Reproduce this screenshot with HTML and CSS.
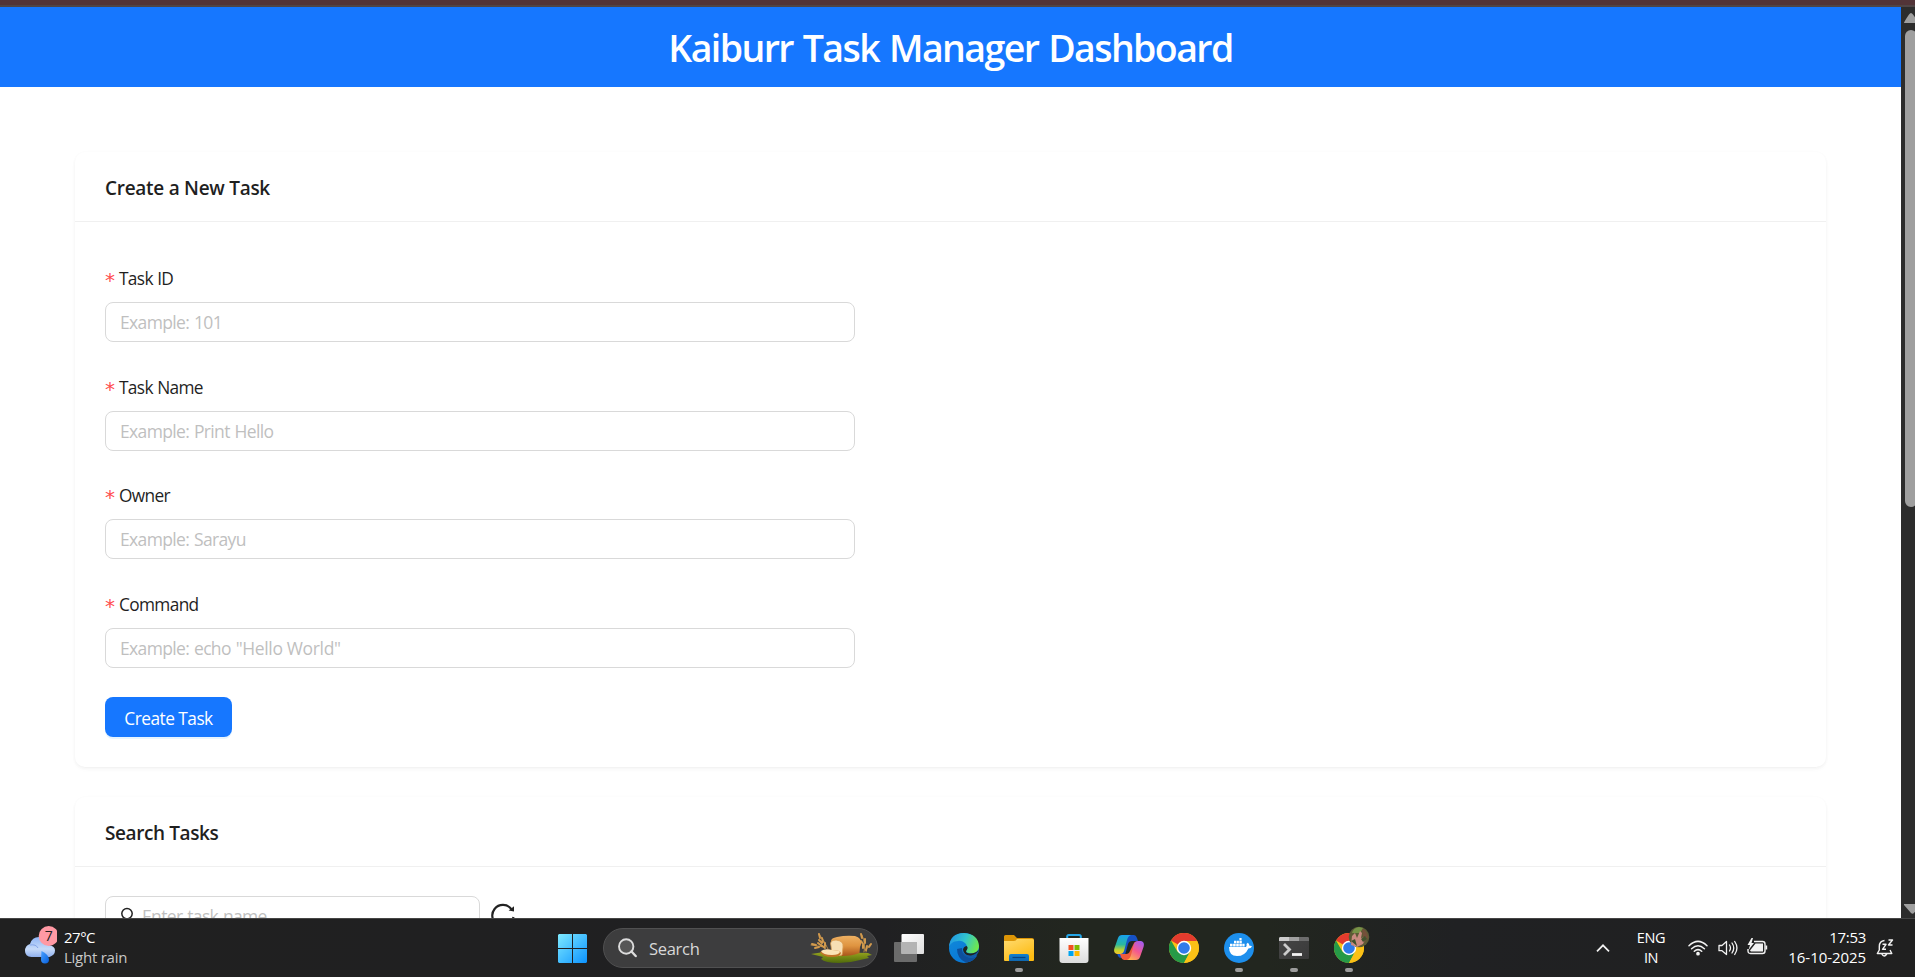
FILE: index.html
```html
<!DOCTYPE html>
<html lang="en">
<head>
<meta charset="utf-8">
<title>Kaiburr Task Manager Dashboard</title>
<link rel="stylesheet" href="styles.css">
</head>
<body>
<div class="screen">
  <div class="window-edge"></div>
  <div class="viewport">
    <div class="page">
      <header class="header"><h1 class="header-title">Kaiburr Task Manager Dashboard</h1></header>
      <main class="content">
        <section class="card">
          <h2 class="card-head"><span class="t-create">Create a New Task</span></h2>
          <form class="card-body form">
            <div class="field">
              <label class="label"><span class="req">*</span><span>Task ID</span></label>
              <div class="input">Example: 101</div>
            </div>
            <div class="field">
              <label class="label"><span class="req">*</span><span>Task Name</span></label>
              <div class="input">Example: Print Hello</div>
            </div>
            <div class="field">
              <label class="label"><span class="req">*</span><span>Owner</span></label>
              <div class="input">Example: Sarayu</div>
            </div>
            <div class="field">
              <label class="label"><span class="req">*</span><span>Command</span></label>
              <div class="input">Example: echo <span class="quoted">"Hello World"</span></div>
            </div>
            <button type="button" class="btn">Create Task</button>
          </form>
        </section>
        <section class="card">
          <h2 class="card-head"><span>Search Tasks</span></h2>
          <div class="card-body search-row">
            <div class="input search-input">
              <svg width="14" height="18" viewBox="0 0 14 18" fill="none" stroke="#222" stroke-width="1.5"><circle cx="7" cy="6.6" r="5.2"/><path d="M3.500 10.800 1 15"/></svg>
              <span>Enter task name</span>
            </div>
            <svg class="reload" width="26" height="26" viewBox="0 0 26 26" fill="none" stroke="#222" stroke-width="2.2"><path d="M21.4 7.2A10.6 10.6 0 1 0 23.4 15"/><path d="M24 4.2v5.3l-5.4-.9z" fill="#222" stroke="none"/></svg>
          </div>
        </section>
      </main>
    </div>
    <div class="scrollbar">
      <svg width="14" height="25" viewBox="0 0 14 25"><path d="M3 16q0-1.200 5-8.500 2-3 4 0l6 8.500z" fill="#9f9f9f"/></svg>
      <div class="thumb"></div>
      <svg class="sb-down" width="14" height="14" viewBox="0 0 14 14"><path d="M3 0h16l-6 9q-1.500 1.500-3 0L3 1z" fill="#9f9f9f"/></svg>
    </div>
  </div>
  <footer class="taskbar">
    <div class="weather">
      <svg width="32" height="40" viewBox="0 0 32 40">
        <defs>
          <linearGradient id="cl" x1="0" y1="0" x2="0" y2="1"><stop offset="0" stop-color="#8fb5f5"/><stop offset=".6" stop-color="#c7dbf9"/><stop offset="1" stop-color="#8fb0ee"/></linearGradient>
          <linearGradient id="dr" x1="0" y1="0" x2="1" y2="1"><stop offset="0" stop-color="#4ba0ff"/><stop offset="1" stop-color="#0660dd"/></linearGradient>
        </defs>
        <path d="M5 18q2-7 9-7t10 8q6 1 6 5.500T24.500 31H6.500Q0 30.500 0 25t5-7z" fill="url(#cl)"/>
        <path d="M5 19q6-1 8 3" fill="none" stroke="#85a5e8"/>
        <path d="M16.500 25q7 3 7.500 8.500a4 4 0 0 1-8 0z" fill="url(#dr)"/>
        <circle cx="23.700" cy="10" r="10" fill="#ff99a4"/>
        <text x="19.800" y="15" class="badge">7</text>
      </svg>
      <div class="two-line"><span class="temp">27°C</span><span class="cond">Light rain</span></div>
    </div>
    <nav class="apps">
      <svg class="win" width="29" height="29" viewBox="0 0 29 29">
        <defs><linearGradient id="w" gradientUnits="userSpaceOnUse" x1="0" y1="0" x2="29" y2="29"><stop offset="0" stop-color="#7eeaff"/><stop offset="1" stop-color="#0c93ff"/></linearGradient></defs>
        <path d="M1 0h13v14H0V1zM15 0h13l1 1v13H15zM0 15h14v14H1l-1-1zM15 15h14v13l-1 1H15z" fill="url(#w)"/>
      </svg>
      <div class="search">
        <svg width="19" height="20" viewBox="0 0 19 20" fill="none" stroke="#dcdcdc"><circle cx="8.200" cy="8.500" r="7.200" stroke-width="1.900" fill="#565656"/><path d="m13.500 13.500 4.200 4.500" stroke-width="2.400" stroke-linecap="round"/></svg>
        <span>Search</span>
        <svg class="bread" width="64" height="32" viewBox="0 0 64 32">
          <defs>
            <linearGradient id="b" x1="0" y1="0" x2="0" y2="1"><stop offset="0" stop-color="#eeb163"/><stop offset=".5" stop-color="#df9440"/><stop offset="1" stop-color="#a9551a"/></linearGradient>
            <linearGradient id="gr" x1="0" y1="0" x2="0" y2="1"><stop offset="0" stop-color="#97a51e"/><stop offset="1" stop-color="#4f6a0b"/></linearGradient>
          </defs>
          <path d="M1 22l13-2 44 1 4 2-5 1 2 2-9 2q-10 3-21 3-14 0-18-4l2-2z" fill="url(#gr)"/>
          <g stroke="#d29a4d" fill="none" stroke-linecap="round"><path d="M18 17Q14 8 9 2" stroke-width=".8"/><path d="M9 2l1 4m2 0 1 4M9 8l3 3m3 0v3m-4-1 4 3" stroke-width="2"/><path d="M14 15 1 13" stroke-width=".8"/><path d="M2 12l4 1M5 16l4-1M8 11l4 3" stroke-width="2"/><path d="M54 20q2-8-2-17M56 20q0-5 5-8" stroke-width=".8"/><path d="M51 2l1 4m-1 3 2 3m2-5v4m-2 2v3M61 12l-2 3m-2-1-1 4" stroke-width="2"/></g>
          <path d="M21 9q0-3 6-4 9-2 18-1 7 2 6 8-.5 2-1 3l-.5 6q-7 3-18 3z" fill="url(#b)"/>
          <path d="M21 14q-2-6 5-6 8 1 7 7l-1 8q-5 2-10-1z" fill="#f7dfb4" stroke="#dda154" stroke-width=".8"/>
          <path d="M10 20q4-3 12-2 8 0 9 3-1 4-9 4-9 0-12-5z" fill="#c27428"/>
          <path d="M11 19q4-3 11-1 8 0 8 2-1 3-8 3-9 0-11-4z" fill="#fbe4b7"/>
        </svg>
      </div>
      <div class="app">
        <svg width="30" height="30" viewBox="0 0 30 30">
          <defs><linearGradient id="tv" x1="0" y1="0" x2="1" y2="1"><stop offset="0" stop-color="#fff"/><stop offset="1" stop-color="#dedede"/></linearGradient></defs>
          <rect y="9" width="23" height="20" rx="1" fill="#6b6b6b"/><rect x="7.500" y="1" width="22.500" height="20" rx="1" fill="url(#tv)"/><path d="M7.500 9H23v12H7.500z" fill="#b4b4b4"/>
        </svg>
      </div>
      <div class="app">
        <svg width="30" height="30" viewBox="0 0 30 30">
          <defs>
            <linearGradient id="e1" x1="0" y1=".3" x2="1" y2=".6"><stop offset="0" stop-color="#2096e4"/><stop offset=".5" stop-color="#32c5ce"/><stop offset="1" stop-color="#71e947"/></linearGradient>
            <linearGradient id="e2" x1="0" y1="0" x2=".6" y2="1"><stop offset="0" stop-color="#118bdb"/><stop offset="1" stop-color="#0876d5"/></linearGradient>
          </defs>
          <circle cx="15" cy="15" r="15" fill="url(#e2)"/>
          <path d="M8 16q0 9 8 13 7 1 12-6-6 3-11 0-4-2-4-8z" fill="#0d4f9c"/>
          <path d="M0 14Q1 0 15 0q14 1 15 13c0 6-5 8-10 7-3-.5-3.500-2-2.200-3C20 12 14 7 9 8 4 8 1 11 0 14z" fill="url(#e1)"/>
          <path d="M17.800 17c-1.600 1.500-.5 3.200 3 3.400 3 .2 6-.5 8.700-3.400v5q-6 2-11 .500-4-2-4.500-6 .5-3 3.500-3.500 2 1 .3 4z" fill="#202320"/>
          <path d="M30 17q-1 4-3.500 6.500Q20 26 16 23q-3-2-3-5 4 5 9 4.500 5-1 8-5.500z" fill="#125aa7"/>
        </svg>
      </div>
      <div class="app">
        <svg width="30" height="30" viewBox="0 0 30 30">
          <defs><linearGradient id="fo" x1="0" y1="0" x2=".6" y2="1"><stop offset="0" stop-color="#ffdb70"/><stop offset="1" stop-color="#fdbb12"/></linearGradient><linearGradient id="fb" x1="0" y1="0" x2="0" y2="1"><stop offset="0" stop-color="#1180d0"/><stop offset="1" stop-color="#0f68b0"/></linearGradient></defs>
          <path d="M0 3.500q0-1.500 1.500-1.500H10l3 3h15q2 0 2 2v6H0z" fill="#dc9506"/>
          <path d="M0 8h10q2 0 3-2h15.500Q30 6 30 7.500V27q0 1-1 1H1q-1 0-1-1z" fill="url(#fo)"/>
          <path d="M5 28v-5q0-2 2-2h16q2 0 2 2v5z" fill="url(#fb)"/><path d="M8.500 24.500h13" stroke="#07437f" stroke-width="1.200"/>
        </svg>
        <i class="dot"></i>
      </div>
      <div class="app">
        <svg width="30" height="30" viewBox="0 0 30 30">
          <defs><linearGradient id="st" x1="0" y1="0" x2="0" y2="1"><stop offset="0" stop-color="#fff"/><stop offset="1" stop-color="#dcdcdc"/></linearGradient></defs>
          <path d="M8.200 6V3.500Q8.200 2 9.700 2h10.600q1.500 0 1.500 1.500V6" fill="none" stroke="#24a6e8" stroke-width="2"/>
          <path d="M.5 5h29v22q0 3-3 3h-23q-3 0-3-3z" fill="url(#st)"/>
          <path d="M9.500 12h5v5h-5z" fill="#f25022"/><path d="M15.500 12h5v5h-5z" fill="#7fba00"/><path d="M9.500 18h5v5h-5z" fill="#00a4ef"/><path d="M15.500 18h5v5h-5z" fill="#ffb900"/>
        </svg>
      </div>
      <div class="app">
        <svg width="30" height="30" viewBox="0 0 30 30">
          <defs>
            <linearGradient id="c1" x1="0" y1="0" x2="0" y2="1"><stop offset="0" stop-color="#17a0f0"/><stop offset=".5" stop-color="#2ab8a0"/><stop offset=".8" stop-color="#c5d32b"/><stop offset="1" stop-color="#f6c22c"/></linearGradient>
            <linearGradient id="c2" x1=".8" y1="0" x2=".2" y2="1"><stop offset="0" stop-color="#a45cf0"/><stop offset=".5" stop-color="#f4588f"/><stop offset="1" stop-color="#ffb34d"/></linearGradient>
          </defs>
          <path d="M10 2h10q2 0 3 3l1 3h-6q-3 0-4 3l-3 11q-1 3-4 3-2 0-3-2l-1-3z" fill="#1651c5"/>
          <path d="M20 27H10q-2 0-3-3l-1-3h6q3 0 4-3l4-8q1-2 4-1z" fill="#ee5a3c"/>
          <path d="M8 2h9q-3 1-4 5l-3 11q-1 3-4 3H3q-4-1-2.500-6L4 5q1-3 4-3z" fill="url(#c1)"/>
          <path d="M22 27h-9q3-1 4-5l3-11q1-3 4-3h3q4 1 2.500 6L26 24q-1 3-4 3z" fill="url(#c2)"/>
        </svg>
      </div>
      <div class="app">
        <svg width="30" height="30" viewBox="0 0 30 30">
          <g id="chrome"><circle cx="15" cy="15" r="15" fill="#fbc116"/>
          <path d="M15 15 2 7.500A15 15 0 0 1 28 7.500z" fill="#e33b2e"/>
          <path d="M2 7.500A15 15 0 0 0 15 30l6.500-11.300L15 15 8.500 18.700z" fill="#269a47"/>
          <path d="M15 8h13.200A15 15 0 0 1 15 30l6-11.500z" fill="#fbc116"/>
          <circle cx="15" cy="15" r="7.200" fill="#fff"/><circle cx="15" cy="15" r="5.800" fill="#2f7bea"/></g>
        </svg>
      </div>
      <div class="app">
        <svg width="30" height="30" viewBox="0 0 30 30">
          <circle cx="15" cy="15" r="15" fill="#1d8fed"/>
          <path d="M5 14h17q1-1 .5-3l1.300-1.200q1.500 1 1.700 3 1.500-.3 2.500.4-.8 2.200-3.600 2.200Q21 23 13 23q-8 0-8-9z" fill="#fff"/>
          <path d="M6 10.800h2.600v2.600H6zM9.100 10.800h2.600v2.600H9.100zM12.200 10.800h2.600v2.600h-2.600zM15.300 10.800h2.600v2.600h-2.600zM18.300 10.800h2.300v2.600h-2.300zM10 7.800h2.200v2.400H10zM12.700 7.800h2.200v2.400h-2.200zM15.400 7.800h2.400v2.400h-2.400zM15.400 5h2.200v2.200h-2.200z" fill="#fff"/>
        </svg>
        <i class="dot"></i>
      </div>
      <div class="app">
        <svg width="30" height="30" viewBox="0 0 30 30">
          <defs><linearGradient id="te" x1="0" y1="0" x2="1" y2="1"><stop offset="0" stop-color="#464646"/><stop offset="1" stop-color="#3a3a3a"/></linearGradient></defs>
          <rect y="4" width="30" height="22" rx="1" fill="url(#te)"/><path d="M1 4h9v4H0V5z" fill="#ccc"/><path d="M10 4h10v4H10z" fill="#a0a0a0"/><path d="M20 4h9l1 1v3H20z" fill="#6c6c6c"/>
          <path d="m5 11 5.500 5.500L5 22" stroke="#ccc" stroke-width="2.800" fill="none"/><path d="M13 21.500h10" stroke="#f2f2f2" stroke-width="2.800"/>
        </svg>
        <i class="dot"></i>
      </div>
      <div class="app">
        <svg class="wide" width="38" height="38" viewBox="0 -8 38 38">
          <use href="#chrome"/>
          <circle cx="25" cy="4" r="10.300" fill="#5c5b35"/>
          <path d="M18 0q1-5 7-6l4 1-3 5z" fill="#769347"/><path d="M28-4q6 2 6 9l-4 5z" fill="#74503a"/>
          <path d="M18 3l3-3 2 5 3-7 2 2-1 5 5-1-3 7-6 3-6-2z" fill="#c98a80"/><path d="m17 8 4-2 2 7zM27 6l4-3 2 3-4 3z" fill="#42532e"/>
        </svg>
        <i class="dot"></i>
      </div>
    </nav>
    <div class="tray">
      <svg width="14" height="8" viewBox="0 0 14 8" fill="none" stroke="#f2f2f2" stroke-width="1.700"><path d="m1 7.300 6-6 6 6"/></svg>
      <div class="two-line lang"><span class="eng">ENG</span><span>IN</span></div>
      <svg class="wifi" width="20" height="16" viewBox="0 0 20 16" fill="none" stroke="#f2f2f2" stroke-width="1.500" stroke-linecap="round"><path d="M1 5.800q9-8.800 18 0M3.600 8.700q6.400-6 12.800 0M6.300 11.300q3.700-3.300 7.400 0"/><circle cx="10" cy="13.700" r="1.100" fill="#fff"/></svg>
      <svg class="vol" width="20" height="16" viewBox="0 0 20 16" fill="none" stroke="#f2f2f2" stroke-width="1.300" stroke-linejoin="round" stroke-linecap="round"><path d="M1 5.500h3L8.500 1.500v13L4 10.700H1zM11.500 5q2 3 0 6M14 3q3.500 5 0 10M16.700 1.500q4.500 6.500 0 13"/></svg>
      <svg class="bat" width="21" height="18" viewBox="0 0 21 18"><path d="M7 3.500h8.500q2.500 0 2.500 2.500v7q0 2.500-2.500 2.500H3.500Q1 15.500 1 13v-2" fill="none" stroke="#f2f2f2" stroke-width="1.400"/><path d="M8.500 5.500h7.500v8H4l-1-1z" fill="#f2f2f2"/><path d="M18.500 7.500h1.700v4h-1.700z" fill="#f2f2f2"/><path d="m4.500 0-4 7H3l-1.500 5L7 5H4.500L6 0z" fill="#f2f2f2"/></svg>
      <div class="two-line clock"><span class="time">17:53</span><span class="date">16-10-2025</span></div>
      <svg class="bell" width="19" height="20" viewBox="0 0 19 20" fill="none" stroke="#f2f2f2" stroke-width="1.400" stroke-linejoin="round"><path d="M8.500 2.500q-5.200.5-5.200 6V12l-2 3.500h14.500L14 12M5.800 16q2.200 4 5 0"/><path d="M6.500 6.300H10l-3.500 5H10M12.500 2h4l-4 5h4" /></svg>
    </div>
  </footer>
</div>
</body>
</html>
```
FILE: styles.css
```css
* { box-sizing: border-box; }
body { margin: 0; background: #fff; font-family: "Open Sans", "Noto Sans", sans-serif; color: #1f1f1f; }
.screen { width: 1915px; height: 977px; overflow: hidden; display: flex; flex-direction: column; }
.window-edge { height: 7px; flex: none; background: #523438; border-bottom: 2px solid #504546; }
.viewport { height: 911px; flex: none; display: flex; overflow: hidden; }
.page { flex: 1; background: #fff; overflow: hidden; }
.header { height: 80px; background: #1677ff; display: flex; align-items: center; justify-content: center; }
.header-title { margin: 0; color: #fff; font-size: 37.500px; font-weight: 600; letter-spacing: -1.600px; word-spacing: 1.800px; line-height: 80px; padding-top: 1px; white-space: nowrap; }
.content { padding: 65px 75px 0; display: flex; flex-direction: column; gap: 30px; }
.card { border-radius: 10px; background: #fff; box-shadow: 0 1px 3px rgba(0,0,0,.04), 0 1px 8px -1px rgba(0,0,0,.02), 0 3px 5px rgba(0,0,0,.02); }
.card-head { margin: 0; height: 70px; padding: 2px 30px 0; border-bottom: 1px solid #f0f0f0; display: flex; align-items: center; font-size: 19px; font-weight: 600; letter-spacing: -0.4px; }
.t-create { letter-spacing: -0.280px; }
.card-body { padding: 30px; }
.form { display: flex; flex-direction: column; align-items: flex-start; height: 545px; padding-top: 40px; }
.field { height: 108.600px; width: 750px; flex: none; }
.label { display: flex; gap: 4px; height: 40px; padding-top: 3px; line-height: 28px; font-size: 17.300px; letter-spacing: -0.650px; word-spacing: 0.500px; }
.req { color: #ff4d4f; width: 10px; font-family: "DejaVu Sans", sans-serif; font-size: 20px; line-height: 31px; letter-spacing: 0; }
.input { height: 40px; border: 1px solid #d9d9d9; border-radius: 8px; padding: 0 14px; line-height: 39px; font-size: 17.500px; letter-spacing: -0.650px; word-spacing: 0.900px; color: #bfbfbf; background: #fff; }
.quoted { letter-spacing: -0.350px; word-spacing: 0; }
.btn { width: 127px; height: 40px; flex: none; margin-top: 0.700px; border: 0; border-radius: 8px; background: #1677ff; color: #fff; font: 17.300px/40px "Open Sans", sans-serif; letter-spacing: -0.520px; padding: 2px 0 0; box-shadow: 0 2px 0 rgba(5,145,255,.1); }
.search-row { display: flex; gap: 10px; padding-top: 29px; }
.search-input { width: 375px; display: flex; align-items: center; gap: 8px; padding: 0 14px; }
.reload { margin-top: 6px; }
.scrollbar { width: 14px; flex: none; background: #2c2c2c; display: flex; flex-direction: column; overflow: hidden; }
.thumb { width: 12px; height: 477px; margin: -2px 0 0 4px; border-radius: 6px; background: #9f9f9f; flex: none; }
.sb-down { margin-top: auto; flex: none; }

.taskbar { height: 59px; flex: none; background: linear-gradient(90deg, #202020 0, #202022 46%, #22261f 56%, #22261f 66%, #202123 76%, #202020 100%); border-top: 1px solid #454545; display: flex; color: #fff; }
.weather { display: flex; width: 558px; padding: 7px 0 0 25px; gap: 7px; }
.badge { font: 14px "Open Sans", sans-serif; fill: #222; }
.two-line { display: flex; flex-direction: column; font-size: 15px; line-height: 20px; white-space: nowrap; letter-spacing: -0.5px; }
.weather .two-line { margin-top: 1px; }
.cond { color: #c8c8c8; letter-spacing: -0.250px; }
.apps { display: flex; align-items: flex-start; }
.win { margin-top: 15px; }
.search { width: 275px; height: 40px; margin: 9px 3px 0 16px; border-radius: 20px; background: #3d3d3e; border: 1px solid #505051; display: flex; align-items: center; padding: 0 3px 0 14px; font-size: 16.500px; letter-spacing: -0.3px; color: #d8d8d8; gap: 12px; }
.bread { margin-left: auto; }
.app { width: 55px; height: 58px; display: flex; flex-direction: column; align-items: center; padding-top: 14px; }
.app svg { flex: none; }
.app .wide { margin: -8px 0 0 8px; }
.dot { width: 8px; height: 4px; border-radius: 2px; background: #9c9c9c; margin-top: 5px; }
.tray { display: flex; margin-left: auto; width: 319px; }
.tray svg { flex: none; }
.tray > svg:first-child { margin-top: 25px; }
.two-line.lang { margin: 9px 0 0 27px; align-items: center; width: 28px; font-size: 14.500px; letter-spacing: -0.4px; }
.wifi { margin: 21px 0 0 23px; }
.vol { margin: 21px 0 0 10px; }
.bat { margin: 19px 0 0 9px; }
.clock { margin: 8px 0 0 19px; width: 79px; align-items: flex-end; }
.time { letter-spacing: -0.300px; }
.date { letter-spacing: -0.060px; }
.bell { margin: 19px 0 0 10px; }
```
